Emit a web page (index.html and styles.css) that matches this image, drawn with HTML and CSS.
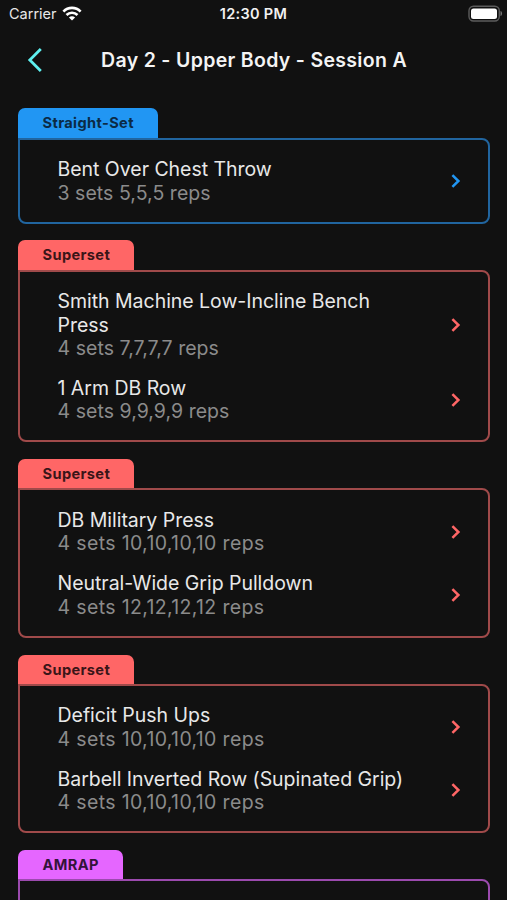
FILE: index.html
```html
<!DOCTYPE html>
<html lang="en">
<head>
    <meta charset="utf-8">
    <title>Day 2 - Upper Body - Session A</title>
    <link rel="stylesheet" href="styles.css">
</head>
<body>
    <svg class="sprite">
        <symbol id="chevron" viewBox="0 0 10 16">
            <path d="M1.4 2.2 L7.4 8 L1.4 13.8" fill="none" stroke="currentColor" stroke-width="2.5"/>
        </symbol>
    </svg>

    <div class="status-bar">
        <div class="carrier">
            <span>Carrier</span>
            <svg class="wifi" width="20" height="16" viewBox="0 0 20 16">
                <g fill="none" stroke="#fff" stroke-width="2.7">
                    <path d="M1.4 5.6 C6.2 0.7 13.8 0.7 18.6 5.6"/>
                    <path d="M4.5 9 C7.6 6 12.4 6 15.5 9"/>
                </g>
                <path d="M6.9 11.4 C8.7 9.8 11.3 9.8 13.1 11.4 L10 14.4 Z" fill="#fff"/>
            </svg>
        </div>
        <div class="time">12:30 PM</div>
        <svg class="battery" width="36" height="17" viewBox="0 0 36 17">
            <rect x="2" y="1.2" width="30.3" height="14.8" rx="4.5" fill="none" stroke="#5c5c5c" stroke-width="1.4"/>
            <rect x="4" y="3.5" width="26" height="10.4" rx="2.5" fill="#fff"/>
            <path d="M33.5 6 C35.6 6.6 35.6 10.4 33.5 11 Z" fill="#777"/>
        </svg>
    </div>

    <div class="header">
        <svg class="back" width="18" height="28" viewBox="0 0 18 28">
            <path d="M15.8 2.9 L4.8 14 L15.8 25.1" fill="none" stroke="currentColor" stroke-width="2.8"/>
        </svg>
        <h1>Day 2 - Upper Body - Session A</h1>
    </div>

    <div class="workout">
        <div class="set straight">
            <div class="tab">Straight-Set</div>
            <div class="card">
                <div class="exercise">
                    <div class="info">
                        <div class="name">Bent Over Chest Throw</div>
                        <div class="reps">3 sets 5,5,5 reps</div>
                    </div>
                    <svg class="arrow"><use href="#chevron"/></svg>
                </div>
            </div>
        </div>

        <div class="set superset">
            <div class="tab">Superset</div>
            <div class="card">
                <div class="exercise">
                    <div class="info">
                        <div class="name">Smith Machine Low-Incline Bench Press</div>
                        <div class="reps">4 sets 7,7,7,7 reps</div>
                    </div>
                    <svg class="arrow"><use href="#chevron"/></svg>
                </div>
                <div class="exercise">
                    <div class="info">
                        <div class="name">1 Arm DB Row</div>
                        <div class="reps">4 sets 9,9,9,9 reps</div>
                    </div>
                    <svg class="arrow"><use href="#chevron"/></svg>
                </div>
            </div>
        </div>

        <div class="set superset">
            <div class="tab">Superset</div>
            <div class="card">
                <div class="exercise">
                    <div class="info">
                        <div class="name">DB Military Press</div>
                        <div class="reps two-digit">4 sets 10,10,10,10 reps</div>
                    </div>
                    <svg class="arrow"><use href="#chevron"/></svg>
                </div>
                <div class="exercise">
                    <div class="info">
                        <div class="name">Neutral-Wide Grip Pulldown</div>
                        <div class="reps two-digit">4 sets 12,12,12,12 reps</div>
                    </div>
                    <svg class="arrow"><use href="#chevron"/></svg>
                </div>
            </div>
        </div>

        <div class="set superset">
            <div class="tab">Superset</div>
            <div class="card">
                <div class="exercise">
                    <div class="info">
                        <div class="name">Deficit Push Ups</div>
                        <div class="reps two-digit">4 sets 10,10,10,10 reps</div>
                    </div>
                    <svg class="arrow"><use href="#chevron"/></svg>
                </div>
                <div class="exercise">
                    <div class="info">
                        <div class="name">Barbell Inverted Row (Supinated Grip)</div>
                        <div class="reps two-digit">4 sets 10,10,10,10 reps</div>
                    </div>
                    <svg class="arrow"><use href="#chevron"/></svg>
                </div>
            </div>
        </div>

        <div class="set amrap">
            <div class="tab">AMRAP</div>
            <div class="card"></div>
        </div>
    </div>
</body>
</html>
```

FILE: styles.css
```css
* {
    box-sizing: border-box;
}

body {
    margin: 0;
    height: 900px;
    overflow: hidden;
    display: flex;
    flex-direction: column;
    background-color: #111;
    color: #e8e8e8;
    font-family: Inter, "Liberation Sans", sans-serif;
}

.sprite {
    display: none;
}

/* Status bar */
.status-bar {
    flex: none;
    display: grid;
    grid-template-columns: 1fr auto 1fr;
    align-items: center;
    height: 27px;
    padding: 0 4px 0 9px;
    font-size: 14.5px;
}

.carrier {
    display: flex;
    align-items: center;
    gap: 5px;
}

.time {
    margin-right: 5px;
    color: #f2f2f2;
    font-weight: 600;
    letter-spacing: 0.3px;
}

.battery {
    justify-self: end;
}

/* Header */
.header {
    flex: none;
    display: grid;
    grid-template-columns: 75px 1fr 74px;
    align-items: center;
    height: 65px;
}

.header h1 {
    margin: 0;
    color: #f4f4f4;
    font-size: 19.5px;
    font-weight: 600;
    letter-spacing: 0.32px;
    text-align: center;
    white-space: nowrap;
}

.back {
    margin-left: 25px;
    color: #5ff1f1;
}

/* Sets */
.workout {
    flex: none;
    padding: 16.4px 17px 0 18px;
}

.set {
    margin-bottom: 16.7px;
}

.tab {
    width: fit-content;
    height: 29.3px;
    padding: 0 24px 0 24.5px;
    border-radius: 7px 7px 0 0;
    background-color: var(--color);
    color: var(--text);
    font-size: 14.6px;
    font-weight: 700;
    line-height: 31px;
    letter-spacing: 0.37px;
}

.card {
    display: flex;
    flex-direction: column;
    gap: 16.6px;
    min-height: 86px;
    padding: 18.5px 27px 16.7px 37.5px;
    border: 2px solid var(--line);
    border-radius: 0 8px 8px 8px;
}

.exercise {
    display: flex;
    align-items: center;
    justify-content: space-between;
}

.info {
    width: 350px;
    font-size: 19.5px;
    line-height: 23.4px;
    letter-spacing: -0.03px;
}

.reps {
    color: #8b8b8b;
    letter-spacing: 0.04px;
}

.reps.two-digit {
    letter-spacing: 0.35px;
}

.arrow {
    flex: none;
    width: 10px;
    height: 16px;
    margin-bottom: 1.4px;
    color: var(--color);
}

.straight {
    --color: #2196f3;
    --line: #21659f;
    --text: #0b2a45;
}

.superset {
    --color: #ff6666;
    --line: #a04a4a;
    --text: #3a1518;
}

.amrap {
    --color: #e566ff;
    --line: #9b4aae;
    --text: #33133a;
}
```
